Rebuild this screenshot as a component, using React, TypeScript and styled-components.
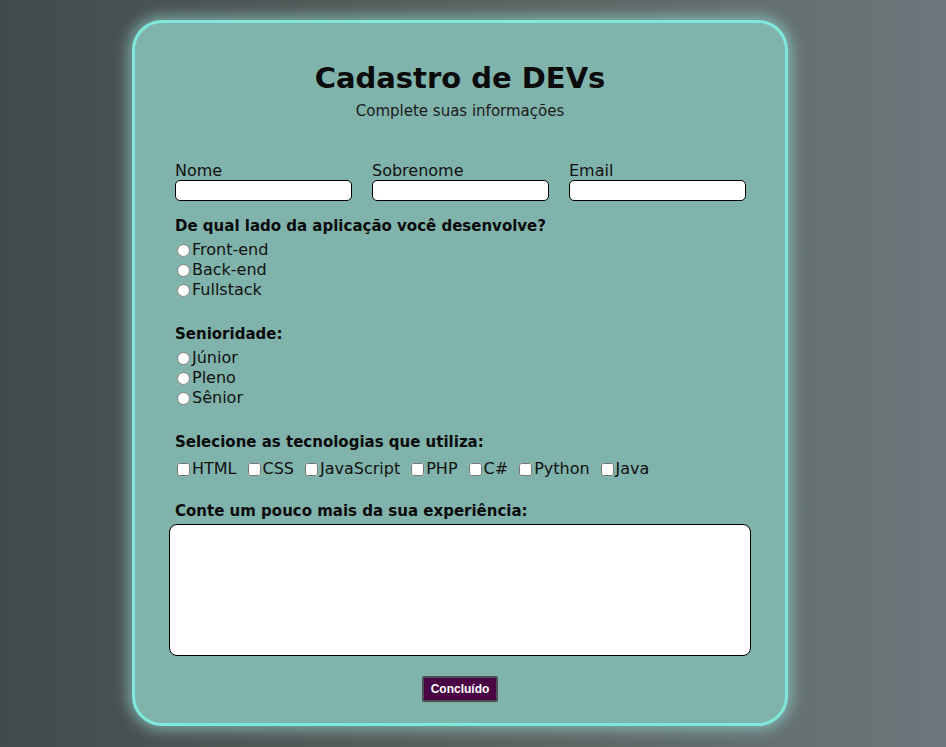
import * as React from "react";
import styled, { createGlobalStyle } from "styled-components";

const GlobalStyle = createGlobalStyle`
  html, body {
    margin: 0;
    padding: 0;
    height: 100%;
  }
  body {
    background: linear-gradient(90deg, #434a4d 0%, #59625f 50%, #6b777b 100%);
    font-family: "DejaVu Sans", "Open Sans", sans-serif;
    overflow: hidden;
  }
`;

const Page = styled.div`
  width: 946px;
  height: 747px;
  display: flex;
  justify-content: center;
  padding: 20px 26px 0 0;
  box-sizing: border-box;
`;

const Card = styled.form`
  width: 656px;
  height: 706px;
  flex-shrink: 0;
  box-sizing: border-box;
  background: #80b3ab;
  border: 3px solid #7ee9d9;
  border-radius: 30px;
  box-shadow: 0 0 14px 4px rgba(160, 235, 230, 0.55);
  padding: 31px 40px 0 40px;
  display: flex;
  flex-direction: column;
  color: #0a0a0a;
`;

const Title = styled.h1`
  margin: 0;
  text-align: center;
  font-size: 29px;
  font-weight: 700;
  line-height: 48px;
`;

const Subtitle = styled.p`
  margin: 0;
  text-align: center;
  font-size: 15px;
  line-height: 18px;
  color: #1a1a1a;
`;

const NameRow = styled.div`
  display: flex;
  gap: 20px;
  margin-top: 42px;
`;

const Field = styled.label`
  display: flex;
  flex-direction: column;
  width: 177px;
  font-size: 16px;
  line-height: 17px;
  color: #111;
`;

const TextInput = styled.input`
  height: 21px;
  box-sizing: border-box;
  border: 1px solid #000;
  border-radius: 5px;
  background: #fff;
  margin: 1px 0 0 0;
`;

const Group = styled.fieldset<{ $gap?: number }>`
  border: none;
  margin: ${(p) => p.$gap ?? 0}px 0 0 0;
  padding: 0;
  display: flex;
  flex-direction: column;
`;

const Question = styled.legend`
  padding: 0;
  font-size: 15px;
  font-weight: 600;
  line-height: 22px;
  margin-bottom: 3px;
`;

const Option = styled.label`
  display: flex;
  align-items: center;
  font-size: 16px;
  line-height: 20px;
  color: #111;
`;

const Radio = styled.input.attrs({ type: "radio" })`
  width: 13px;
  height: 13px;
  margin: 0 2px 0 2px;
`;

const CheckRow = styled.div`
  display: flex;
  gap: 9px;
  margin-top: 3px;
`;

const Check = styled.input.attrs({ type: "checkbox" })`
  width: 13px;
  height: 13px;
  margin: 0 2px 0 2px;
`;

const Experience = styled.textarea`
  margin: -1px -6px 0 -6px;
  height: 132px;
  box-sizing: border-box;
  border: 1px solid #000;
  border-radius: 8px;
  background: #fff;
  resize: none;
`;

const Actions = styled.div`
  display: flex;
  justify-content: center;
  margin-top: 20px;
`;

const SubmitButton = styled.button`
  background: #4a0544;
  color: #fff;
  font-family: "Liberation Sans", Arial, sans-serif;
  font-weight: 700;
  font-size: 12px;
  height: 26px;
  padding: 0 7px;
  border: 2px solid #4b4f50;
  border-radius: 2px;
`;

const sides = ["Front-end", "Back-end", "Fullstack"];
const levels = ["Júnior", "Pleno", "Sênior"];
const techs = ["HTML", "CSS", "JavaScript", "PHP", "C#", "Python", "Java"];

export default function App() {
  return (
    <>
      <GlobalStyle />
      <Page>
        <Card onSubmit={(e) => e.preventDefault()}>
          <Title>Cadastro de DEVs</Title>
          <Subtitle>Complete suas informações</Subtitle>

          <NameRow>
            <Field>
              Nome
              <TextInput type="text" />
            </Field>
            <Field>
              Sobrenome
              <TextInput type="text" />
            </Field>
            <Field>
              Email
              <TextInput type="email" />
            </Field>
          </NameRow>

          <Group $gap={14}>
            <Question>De qual lado da aplicação você desenvolve?</Question>
            {sides.map((s) => (
              <Option key={s}>
                <Radio name="lado" />
                {s}
              </Option>
            ))}
          </Group>

          <Group $gap={23}>
            <Question>Senioridade:</Question>
            {levels.map((s) => (
              <Option key={s}>
                <Radio name="senioridade" />
                {s}
              </Option>
            ))}
          </Group>

          <Group $gap={23}>
            <Question>Selecione as tecnologias que utiliza:</Question>
            <CheckRow>
              {techs.map((t) => (
                <Option key={t}>
                  <Check />
                  {t}
                </Option>
              ))}
            </CheckRow>
          </Group>

          <Group $gap={21}>
            <Question>Conte um pouco mais da sua experiência:</Question>
            <Experience />
          </Group>

          <Actions>
            <SubmitButton type="submit">Concluído</SubmitButton>
          </Actions>
        </Card>
      </Page>
    </>
  );
}
